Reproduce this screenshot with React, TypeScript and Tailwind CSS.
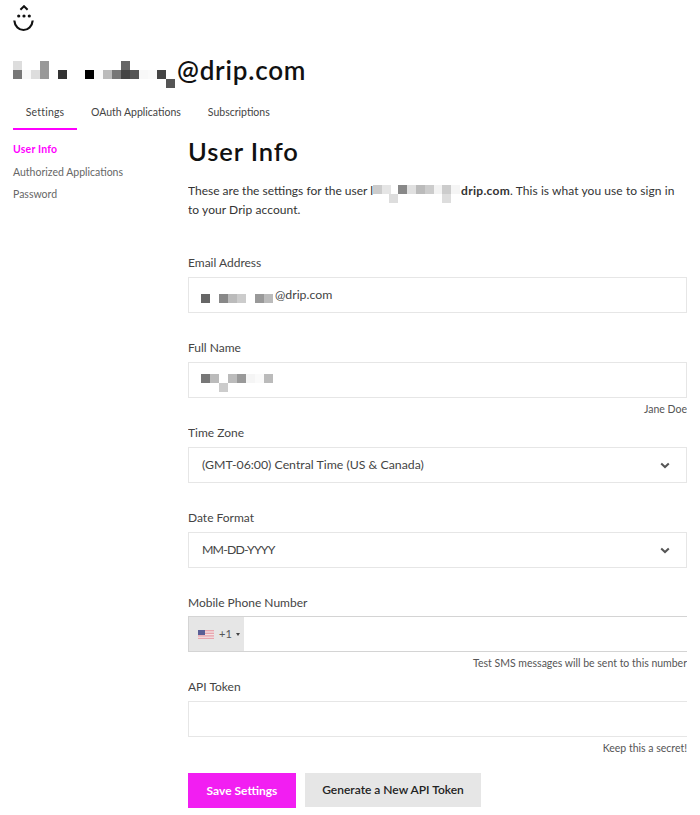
const font = { fontFamily: '"Lato", "Liberation Sans", sans-serif' };

type Cell = [number, number, string];

function Mosaic({ w, h, cells, cell = 9, className }: { w: number; h: number; cells: Cell[]; cell?: number; className?: string }) {
  return (
    <svg width={w} height={h} viewBox={`0 0 ${w} ${h}`} className={className} aria-hidden="true">
      {cells.map(([x, y, c], i) => (
        <rect key={i} x={x} y={y} width={cell} height={cell} fill={c} />
      ))}
    </svg>
  );
}

const headingCells: Cell[] = [
  [0, 0, "#dddddd"], [27, 0, "#999999"], [108, 0, "#666666"],
  [0, 9, "#777777"], [9, 9, "#f8f8f8"], [18, 9, "#dddddd"], [27, 9, "#999999"], [45, 9, "#333333"],
  [72, 9, "#000000"], [81, 9, "#fafafa"], [90, 9, "#bbbbbb"], [99, 9, "#777777"], [108, 9, "#444444"],
  [117, 9, "#555555"], [126, 9, "#f8f8f8"], [135, 9, "#fafafa"], [144, 9, "#444444"],
  [153, 18, "#555555"],
];
const paraCells: Cell[] = [
  [0, 0, "#cccccc"], [9, 0, "#e5e5e5"], [25, 0, "#888888"], [34, 0, "#e0e0e0"], [43, 0, "#bbbbbb"],
  [52, 0, "#cccccc"], [61, 0, "#f3f3f3"], [69, 0, "#cccccc"], [78, 0, "#f5f5f5"],
  [16, 9, "#dddddd"], [69, 9, "#dddddd"],
];
const emailCells: Cell[] = [
  [0, 0, "#666666"], [18, 0, "#888888"], [27, 0, "#bbbbbb"], [36, 0, "#cccccc"], [54, 0, "#999999"], [63, 0, "#bbbbbb"],
];
const nameCells: Cell[] = [
  [0, 0, "#777777"], [9, 0, "#bbbbbb"], [27, 0, "#bbbbbb"], [36, 0, "#999999"], [45, 0, "#f5f5f5"],
  [54, 0, "#fafafa"], [63, 0, "#bbbbbb"], [18, 9, "#cccccc"],
];

function Logo() {
  return (
    <svg width="22" height="27" viewBox="0 0 22 27" fill="none" className="block">
      <path d="M7.4 4.8 11 1.2l3.6 3.6" stroke="#111" strokeWidth="2" />
      <circle cx="5.7" cy="11" r="1.6" fill="#111" />
      <circle cx="11" cy="11" r="1.6" fill="#111" />
      <circle cx="16.3" cy="11" r="1.6" fill="#111" />
      <path d="M1.3 15.5C1.8 21.5 6 25 10.5 25s8.7-3.5 9.2-9.5" stroke="#111" strokeWidth="2.2" />
    </svg>
  );
}

function Flag() {
  return (
    <svg width="16" height="9" viewBox="0 0 16 9" className="block">
      <rect width="16" height="9" fill="#e8a6ae" />
      <rect y="1.4" width="16" height="1.2" fill="#f3e4e6" />
      <rect y="4" width="16" height="1.2" fill="#f3e4e6" />
      <rect y="6.6" width="16" height="1.2" fill="#f3e4e6" />
      <rect width="7" height="5" fill="#5a5f96" />
    </svg>
  );
}

function Chevron() {
  return (
    <svg width="10" height="7" viewBox="0 0 10 7" fill="none" className="block">
      <path d="M1.2 1.4 5 5l3.8-3.6" stroke="#555" strokeWidth="2" />
    </svg>
  );
}

function Label({ children }: { children: React.ReactNode }) {
  return <div className="h-[19px] text-[12px] leading-[19px] text-[#444]">{children}</div>;
}

function Hint({ children, className = "" }: { children: string; className?: string }) {
  return <div className={`h-[25px] whitespace-nowrap pt-[3px] text-right text-[10.5px] leading-[16px] text-[#555] ${className}`}>{children}</div>;
}

function Box({ children, className = "" }: { children?: React.ReactNode; className?: string }) {
  return (
    <div className={`flex h-[36px] items-center border border-[#e6e6e6] pl-[13px] pr-[16px] text-[12.3px] text-[#444] ${className}`}>
      {children}
    </div>
  );
}

export default function App() {
  return (
    <div style={font} className="h-[815px] w-[700px] overflow-hidden bg-white">
      <div className="w-[687px] pl-[13px]">
        <div className="pt-[5px]">
          <Logo />
        </div>
        <h1 className="mt-[28px] flex h-[27px] items-start text-[26px] font-semibold leading-[27px] tracking-[0.8px] text-[#111]">
          <Mosaic w={171} h={27} cells={headingCells} className="mt-[1px] shrink-0" />
          <span className="-mt-[3px] ml-[-7px]">@drip.com</span>
        </h1>
        <nav className="mt-[14px] flex h-[29px] text-[10.5px] text-[#444]">
          <div className="w-[64px] border-b-2 border-[#ff00ff] pt-[4px] text-center tracking-[0.2px]">Settings</div>
          <div className="ml-[14px] pt-[4px]">OAuth Applications</div>
          <div className="ml-[27px] pt-[4px]">Subscriptions</div>
        </nav>
        <div className="flex">
          <aside className="w-[175px] shrink-0 pt-[8px] text-[10.5px] leading-[22.5px] text-[#666]">
            <div className="font-bold tracking-[0.2px] text-[#ff00ff]">User Info</div>
            <div>Authorized Applications</div>
            <div>Password</div>
          </aside>
          <main className="min-w-0 flex-1 overflow-hidden">
            <h2 className="mt-[6px] h-[30px] text-[25.5px] font-semibold leading-[30px] tracking-[0.9px] text-[#111]">User Info</h2>
            <p className="mt-[15px] pr-[10px] text-[12px] leading-[19px] text-[#333]">
              These are the settings for the user l
              <span className="inline-block h-[10px] w-[88px]">
                <Mosaic w={87} h={18} cells={paraCells} className="block" />
              </span>
              <b className="tracking-[0.3px]">drip.com</b>
              <span className="tracking-[0.07px]">. This is what you use to sign in to your Drip account.</span>
            </p>
            <div className="mt-[34px]"><Label>Email Address</Label></div>
            <Box className="mt-[5px]">
              <Mosaic w={72} h={9} cells={emailCells} className="-ml-[1px] mt-[6px] shrink-0" />
              <span className="ml-[2px]">@drip.com</span>
            </Box>
            <div className="mt-[25px]"><Label>Full Name</Label></div>
            <Box className="mt-[5px]">
              <Mosaic w={72} h={18} cells={nameCells} className="-ml-[1px] mt-[6px] shrink-0" />
            </Box>
            <Hint>Jane Doe</Hint>
            <Label>Time Zone</Label>
            <Box className="mt-[5px] justify-between">
              <span>(GMT-06:00) Central Time (US &amp; Canada)</span>
              <Chevron />
            </Box>
            <div className="mt-[25px]"><Label>Date Format</Label></div>
            <Box className="mt-[5px] justify-between">
              <span className="tracking-[-0.8px]">MM-DD-YYYY</span>
              <Chevron />
            </Box>
            <div className="mt-[25px]"><Label>Mobile Phone Number</Label></div>
            <div className="mt-[4px] flex h-[36px] border-y border-l border-[#d4d4d4]">
              <div className="flex w-[55px] items-center bg-[#e6e6e6] pl-[9px] text-[11px] text-[#555]">
                <Flag />
                <span className="ml-[5px]">+1</span>
                <span className="ml-[4px] mt-[1px] h-0 w-0 border-x-[2.5px] border-t-[3px] border-x-transparent border-t-[#444]" />
              </div>
            </div>
            <Hint>Test SMS messages will be sent to this number</Hint>
            <Label>API Token</Label>
            <div className="mt-[5px] h-[36px] border-y border-l border-[#e6e6e6]" />
            <Hint>Keep this a secret!</Hint>
            <div className="mt-[11px] flex items-start gap-[9px]">
              <button className="h-[35px] w-[108px] bg-[#f21ef2] text-[12px] font-bold text-white">Save Settings</button>
              <button className="h-[34px] w-[176px] bg-[#e6e6e6] text-[12px] font-semibold text-[#222]">Generate a New API Token</button>
            </div>
          </main>
        </div>
      </div>
    </div>
  );
}
